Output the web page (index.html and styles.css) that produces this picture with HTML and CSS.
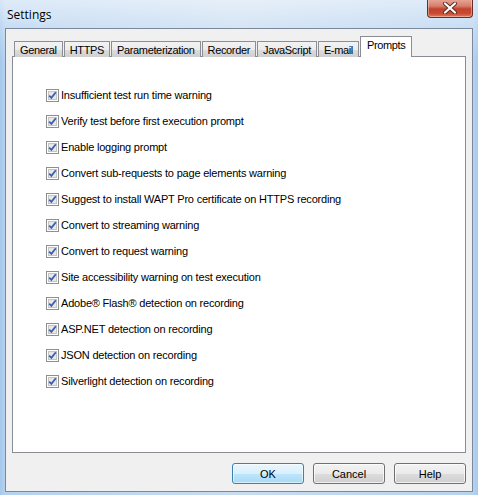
FILE: index.html
```html
<!DOCTYPE html>
<html>
<head>
<meta charset="utf-8">
<link rel="stylesheet" href="styles.css">
</head>
<body>
<div class="window">
  <div class="titlebar">
    <span class="title">Settings</span>
    <div class="close">
      <svg width="16" height="12" viewBox="0 0 16 12"><path d="M3 1.5 L13 10.5 M13 1.5 L3 10.5" stroke="#5a2a20" stroke-width="4" stroke-linecap="round"/><path d="M3 1.5 L13 10.5 M13 1.5 L3 10.5" stroke="#ffffff" stroke-width="2.2" stroke-linecap="round"/></svg>
    </div>
  </div>
  <div class="client">
    <div class="tabs">
      <div class="tab">General</div>
      <div class="tab">HTTPS</div>
      <div class="tab">Parameterization</div>
      <div class="tab">Recorder</div>
      <div class="tab">JavaScript</div>
      <div class="tab">E-mail</div>
      <div class="tab active">Prompts</div>
    </div>
    <div class="panel">
      <ul class="list">
        <li><span class="cb"><svg width="13" height="13" viewBox="0 0 13 13"><rect x="0.5" y="0.5" width="12" height="12" fill="#fff" stroke="#8e8f8f"/><rect x="2.5" y="2.5" width="8" height="8" fill="#e8e8e8" stroke="#c4c4c4"/><path d="M3.2 6.6 L5.4 8.9 L9.8 3.2" fill="none" stroke="#3a5eb0" stroke-width="1.8"/></svg></span>Insufficient test run time warning</li>
        <li><span class="cb"><svg width="13" height="13" viewBox="0 0 13 13"><rect x="0.5" y="0.5" width="12" height="12" fill="#fff" stroke="#8e8f8f"/><rect x="2.5" y="2.5" width="8" height="8" fill="#e8e8e8" stroke="#c4c4c4"/><path d="M3.2 6.6 L5.4 8.9 L9.8 3.2" fill="none" stroke="#3a5eb0" stroke-width="1.8"/></svg></span>Verify test before first execution prompt</li>
        <li><span class="cb"><svg width="13" height="13" viewBox="0 0 13 13"><rect x="0.5" y="0.5" width="12" height="12" fill="#fff" stroke="#8e8f8f"/><rect x="2.5" y="2.5" width="8" height="8" fill="#e8e8e8" stroke="#c4c4c4"/><path d="M3.2 6.6 L5.4 8.9 L9.8 3.2" fill="none" stroke="#3a5eb0" stroke-width="1.8"/></svg></span>Enable logging prompt</li>
        <li><span class="cb"><svg width="13" height="13" viewBox="0 0 13 13"><rect x="0.5" y="0.5" width="12" height="12" fill="#fff" stroke="#8e8f8f"/><rect x="2.5" y="2.5" width="8" height="8" fill="#e8e8e8" stroke="#c4c4c4"/><path d="M3.2 6.6 L5.4 8.9 L9.8 3.2" fill="none" stroke="#3a5eb0" stroke-width="1.8"/></svg></span>Convert sub-requests to page elements warning</li>
        <li><span class="cb"><svg width="13" height="13" viewBox="0 0 13 13"><rect x="0.5" y="0.5" width="12" height="12" fill="#fff" stroke="#8e8f8f"/><rect x="2.5" y="2.5" width="8" height="8" fill="#e8e8e8" stroke="#c4c4c4"/><path d="M3.2 6.6 L5.4 8.9 L9.8 3.2" fill="none" stroke="#3a5eb0" stroke-width="1.8"/></svg></span>Suggest to install WAPT Pro certificate on HTTPS recording</li>
        <li><span class="cb"><svg width="13" height="13" viewBox="0 0 13 13"><rect x="0.5" y="0.5" width="12" height="12" fill="#fff" stroke="#8e8f8f"/><rect x="2.5" y="2.5" width="8" height="8" fill="#e8e8e8" stroke="#c4c4c4"/><path d="M3.2 6.6 L5.4 8.9 L9.8 3.2" fill="none" stroke="#3a5eb0" stroke-width="1.8"/></svg></span>Convert to streaming warning</li>
        <li><span class="cb"><svg width="13" height="13" viewBox="0 0 13 13"><rect x="0.5" y="0.5" width="12" height="12" fill="#fff" stroke="#8e8f8f"/><rect x="2.5" y="2.5" width="8" height="8" fill="#e8e8e8" stroke="#c4c4c4"/><path d="M3.2 6.6 L5.4 8.9 L9.8 3.2" fill="none" stroke="#3a5eb0" stroke-width="1.8"/></svg></span>Convert to request warning</li>
        <li><span class="cb"><svg width="13" height="13" viewBox="0 0 13 13"><rect x="0.5" y="0.5" width="12" height="12" fill="#fff" stroke="#8e8f8f"/><rect x="2.5" y="2.5" width="8" height="8" fill="#e8e8e8" stroke="#c4c4c4"/><path d="M3.2 6.6 L5.4 8.9 L9.8 3.2" fill="none" stroke="#3a5eb0" stroke-width="1.8"/></svg></span>Site accessibility warning on test execution</li>
        <li><span class="cb"><svg width="13" height="13" viewBox="0 0 13 13"><rect x="0.5" y="0.5" width="12" height="12" fill="#fff" stroke="#8e8f8f"/><rect x="2.5" y="2.5" width="8" height="8" fill="#e8e8e8" stroke="#c4c4c4"/><path d="M3.2 6.6 L5.4 8.9 L9.8 3.2" fill="none" stroke="#3a5eb0" stroke-width="1.8"/></svg></span>Adobe® Flash® detection on recording</li>
        <li><span class="cb"><svg width="13" height="13" viewBox="0 0 13 13"><rect x="0.5" y="0.5" width="12" height="12" fill="#fff" stroke="#8e8f8f"/><rect x="2.5" y="2.5" width="8" height="8" fill="#e8e8e8" stroke="#c4c4c4"/><path d="M3.2 6.6 L5.4 8.9 L9.8 3.2" fill="none" stroke="#3a5eb0" stroke-width="1.8"/></svg></span>ASP.NET detection on recording</li>
        <li><span class="cb"><svg width="13" height="13" viewBox="0 0 13 13"><rect x="0.5" y="0.5" width="12" height="12" fill="#fff" stroke="#8e8f8f"/><rect x="2.5" y="2.5" width="8" height="8" fill="#e8e8e8" stroke="#c4c4c4"/><path d="M3.2 6.6 L5.4 8.9 L9.8 3.2" fill="none" stroke="#3a5eb0" stroke-width="1.8"/></svg></span>JSON detection on recording</li>
        <li><span class="cb"><svg width="13" height="13" viewBox="0 0 13 13"><rect x="0.5" y="0.5" width="12" height="12" fill="#fff" stroke="#8e8f8f"/><rect x="2.5" y="2.5" width="8" height="8" fill="#e8e8e8" stroke="#c4c4c4"/><path d="M3.2 6.6 L5.4 8.9 L9.8 3.2" fill="none" stroke="#3a5eb0" stroke-width="1.8"/></svg></span>Silverlight detection on recording</li>
      </ul>
    </div>
    <div class="buttons">
      <button class="btn default">OK</button>
      <button class="btn">Cancel</button>
      <button class="btn">Help</button>
    </div>
  </div>
</div>
</body>
</html>
```

FILE: styles.css
```css
* { box-sizing: border-box; }
html, body { margin: 0; padding: 0; }
body {
  width: 478px;
  height: 495px;
  overflow: hidden;
  background: linear-gradient(180deg, #c9dcf0 0%, #b9d3ee 40%, #a9caee 100%);
  font-family: "Liberation Sans", Arial, sans-serif;
  font-size: 11px;
  color: #000;
}
.window {
  width: 478px;
  height: 495px;
  display: flex;
  flex-direction: column;
  background:
    linear-gradient(180deg, rgba(255,255,255,0.55) 0px, rgba(255,255,255,0.25) 28px, rgba(255,255,255,0) 60px),
    linear-gradient(90deg, #a6c8ec 0px, #b5d2f0 5px, #c8dcf1 50%, #b6d3f0 473px, #a8caee 478px);
}
.titlebar {
  height: 28px;
  display: flex;
  justify-content: space-between;
  align-items: flex-start;
  padding-left: 7px;
  padding-right: 5px;
}
.title {
  font-family: "Open Sans", "Noto Sans", sans-serif;
  font-size: 12px;
  line-height: 12px;
  margin-top: 9px;
  color: #000;
  text-shadow: 0 0 6px rgba(255,255,255,0.9);
}
.close {
  width: 46px;
  height: 19px;
  margin-top: -1px;
  border: 1px solid #6b2d24;
  border-top: none;
  border-radius: 0 0 4px 4px;
  background: linear-gradient(180deg, #e8a99a 0%, #d77d69 40%, #c1432c 55%, #c94a33 80%, #e07b5c 100%);
  box-shadow: inset 0 0 0 1px rgba(255,255,255,0.35);
  display: flex;
  align-items: center;
  justify-content: center;
}
.client {
  margin: 0 5px 3px 5px;
  height: 464px;
  border: 1px solid #7a8a9c;
  background: #f0f0f0;
  padding: 7px 6px 0 6px;
  display: flex;
  flex-direction: column;
}
.tabs {
  display: flex;
  align-items: flex-end;
  height: 21px;
  padding-left: 2px;
  margin-bottom: -1px;
  position: relative;
  z-index: 1;
}
.tab {
  height: 16px;
  padding: 0 5px;
  margin-right: 1px;
  border: 1px solid #8c8e94;
  border-bottom: none;
  background: linear-gradient(180deg, #f3f3f3 0%, #ebebeb 50%, #dddddd 51%, #cfcfcf 100%);
  font-size: 11px;
  letter-spacing: -0.35px;
  line-height: 16px;
  white-space: nowrap;
}
.tab.active {
  height: 21px;
  padding: 1px 6px 0 6px;
  background: #fff;
  border-color: #898c95;
  line-height: 15px;
}
.panel {
  height: 397px;
  background: #fff;
  border: 1px solid #898c95;
}
.list {
  list-style: none;
  margin: 0;
  padding: 25px 0 0 33px;
}
.list li {
  display: flex;
  align-items: center;
  height: 26px;
  font-size: 11px;
  letter-spacing: -0.2px;
  white-space: nowrap;
}
.cb {
  display: inline-flex;
  width: 13px;
  height: 13px;
  margin-right: 2px;
}
.buttons {
  display: flex;
  justify-content: flex-end;
  gap: 9px;
  padding-top: 10px;
}
.btn {
  width: 72px;
  height: 21px;
  border: 1px solid #707070;
  border-radius: 3px;
  background: linear-gradient(180deg, #f2f2f2 0%, #ebebeb 50%, #dddddd 51%, #cfcfcf 100%);
  box-shadow: inset 0 0 0 1px rgba(255,255,255,0.7);
  font-family: "Liberation Sans", Arial, sans-serif;
  font-size: 11px;
  color: #000;
  padding: 0;
}
.btn.default {
  border-color: #3c7fb1;
  background: linear-gradient(180deg, #eaf6fd 0%, #d9f0fc 50%, #bee6fd 51%, #a7d9f5 100%);
  box-shadow: inset 0 0 0 1px rgba(255,255,255,0.6);
}
```
